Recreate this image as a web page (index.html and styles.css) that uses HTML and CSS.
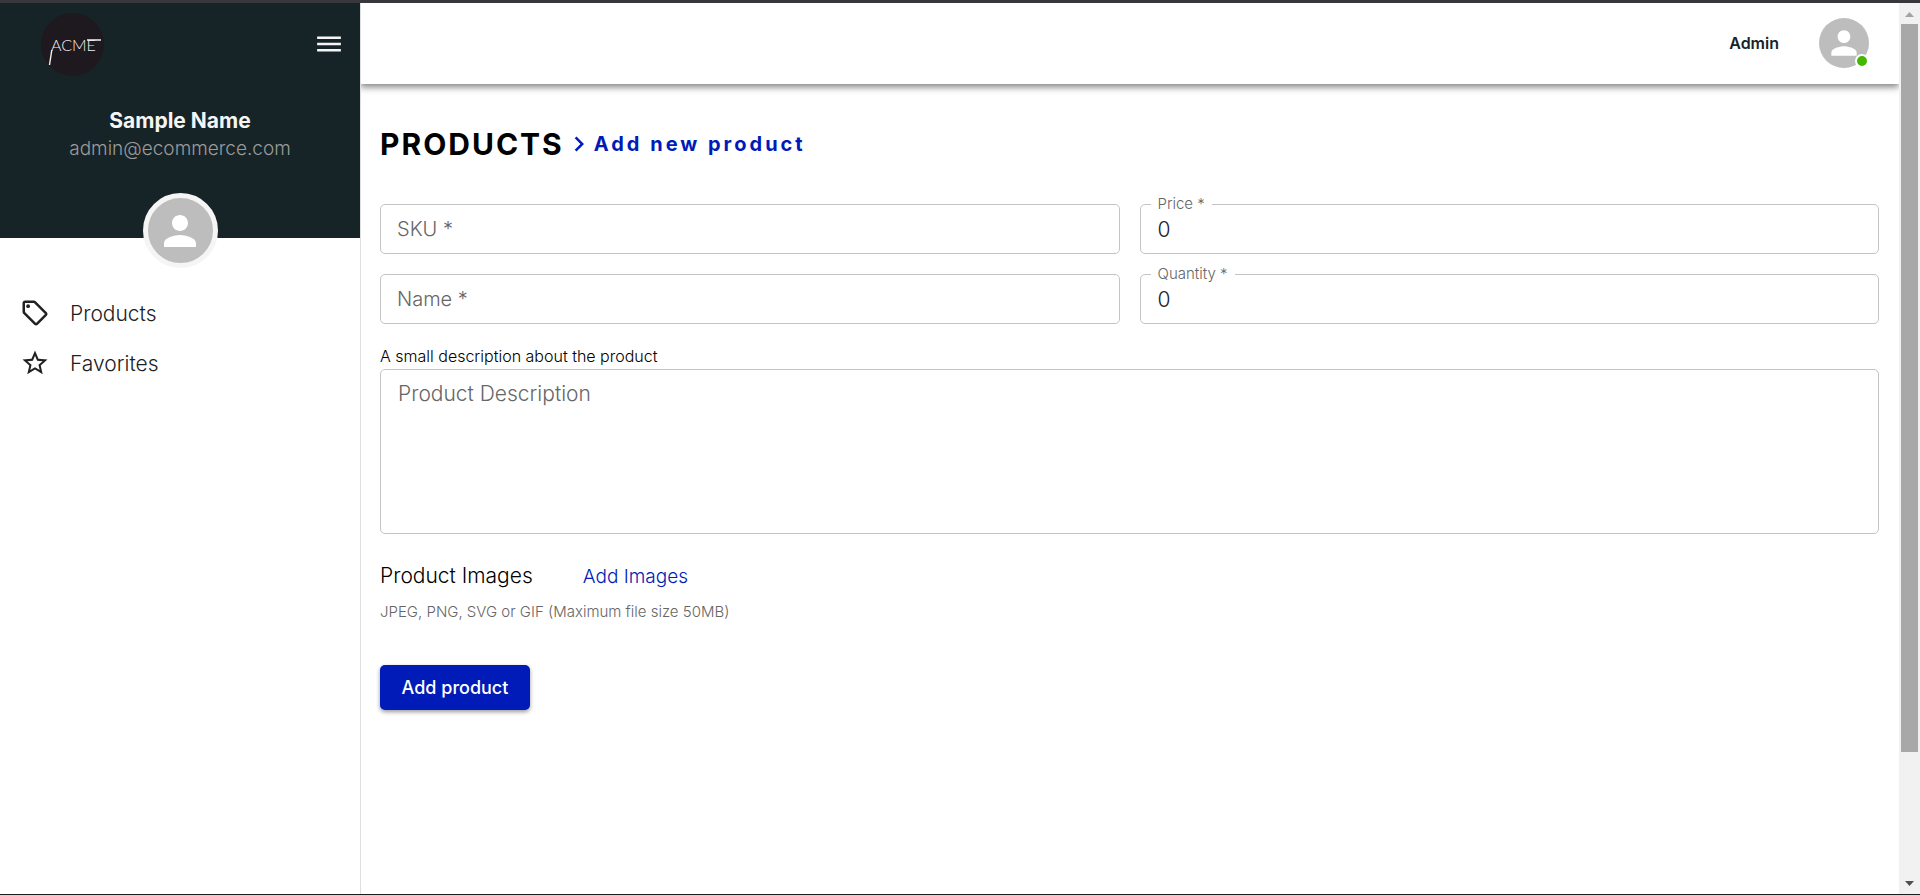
FILE: index.html
```html
<!DOCTYPE html>
<html lang="en">
<head>
<meta charset="utf-8">
<meta name="viewport" content="width=device-width, initial-scale=1">
<title>Add new product</title>
<link rel="stylesheet" href="styles.css">
</head>
<body>
<div class="app">
  <aside class="sidebar">
    <div class="profile">
      <div class="brand-row">
        <svg class="logo" viewBox="0 0 63 63" role="img" aria-label="ACME">
          <circle cx="31.500" cy="31.500" r="31.500" fill="#1e181f"/>
          <text class="logo-text" x="10" y="38">ACME</text>
          <path d="M10.800 37L8.500 52M46 27H60" fill="none" stroke="#f2f2f2" stroke-width="1.400"/>
        </svg>
        <button class="menu-button" type="button" aria-label="Toggle menu">
          <svg class="icon" viewBox="0 0 24 24"><path d="M2.500 18h19v-2h-19v2zm0-5h19v-2h-19v2zm0-7v2h19V6h-19z"/></svg>
        </button>
      </div>
      <p class="profile-name">Sample Name</p>
      <p class="profile-email">admin@ecommerce.com</p>
      <div class="profile-avatar">
        <svg class="person" viewBox="0 0 24 24"><path d="M12 12c2.210 0 4-1.790 4-4s-1.790-4-4-4-4 1.790-4 4 1.790 4 4 4zm0 2c-2.670 0-8 1.340-8 4v2h16v-2c0-2.660-5.330-4-8-4z"/></svg>
      </div>
    </div>
    <nav class="nav">
      <a class="nav-link" href="#products">
        <svg class="icon" viewBox="0 0 24 24"><path d="M21.410 11.410l-8.830-8.830c-.37-.37-.88-.58-1.410-.58H4c-1.100 0-2 .9-2 2v7.170c0 .53.21 1.040.59 1.410l8.830 8.830c.78.78 2.050.78 2.830 0l7.170-7.170c.78-.78.78-2.040-.01-2.830zM12.830 20L4 11.170V4h7.170L20 12.830 12.830 20z"/><circle cx="6.500" cy="6.500" r="1.500"/></svg>
        Products
      </a>
      <a class="nav-link" href="#favorites">
        <svg class="icon" viewBox="0 0 24 24"><path d="M22 9.240l-7.190-.62L12 2 9.190 8.630 2 9.240l5.460 4.730L5.820 21 12 17.270 18.180 21l-1.630-7.030L22 9.240zM12 15.400l-3.760 2.270 1-4.280-3.320-2.880 4.380-.38L12 6.100l1.710 4.040 4.380.38-3.320 2.880 1 4.280L12 15.400z"/></svg>
        Favorites
      </a>
    </nav>
  </aside>

  <div class="page">
    <header class="topbar">
      <span class="role">Admin</span>
      <div class="avatar">
        <svg class="person" viewBox="0 0 24 24"><path d="M12 12c2.210 0 4-1.790 4-4s-1.790-4-4-4-4 1.790-4 4 1.790 4 4 4zm0 2c-2.670 0-8 1.340-8 4v2h16v-2c0-2.660-5.330-4-8-4z"/></svg>
        <span class="status"></span>
      </div>
    </header>

    <main class="content">
      <div class="breadcrumb">
        <h1 class="title">PRODUCTS</h1>
        <svg class="chevron" viewBox="0 0 24 24"><path d="M10 6L8.590 7.410 13.170 12l-4.580 4.590L10 18l6-6z"/></svg>
        <h2 class="subtitle">Add new product</h2>
      </div>

      <form class="form">
        <div class="fields">
          <div class="field">
            <input class="input" id="sku" type="text">
            <label class="hint" for="sku">SKU *</label>
          </div>
          <div class="field">
            <input class="input" id="price" type="text" inputmode="decimal" value="0">
            <label class="float" for="price">Price *</label>
          </div>
          <div class="field">
            <input class="input" id="name" type="text">
            <label class="hint" for="name">Name *</label>
          </div>
          <div class="field">
            <input class="input" id="quantity" type="text" inputmode="numeric" value="0">
            <label class="float" for="quantity">Quantity *</label>
          </div>
        </div>

        <label class="caption" for="description">A small description about the product</label>
        <textarea class="input textarea" id="description" placeholder="Product Description"></textarea>

        <div class="images">
          <h3 class="images-title">Product Images</h3>
          <button class="link-button" type="button">Add Images</button>
        </div>
        <p class="note">JPEG, PNG, SVG or GIF (Maximum file size 50MB)</p>
        <button class="submit" type="submit">Add product</button>
      </form>
    </main>
  </div>

  <div class="scrollbar" aria-hidden="true">
    <svg class="arrow arrow-up" viewBox="0 0 9 5"><path d="M0 5L4.500 0L9 5z"/></svg>
    <div class="track"><div class="thumb"></div></div>
    <svg class="arrow arrow-down" viewBox="0 0 9 5"><path d="M0 0H9L4.500 5z"/></svg>
  </div>
</div>
</body>
</html>
```
FILE: styles.css
```css
* {
  box-sizing: border-box;
}

body,
h1,
h2,
h3,
p {
  margin: 0;
}

body,
button,
input,
textarea {
  font-family: Inter, "Open Sans", sans-serif;
  font-weight: 300;
}

.app {
  display: flex;
  min-height: 100vh;
  border-top: 3px solid #38373b;
  border-bottom: 1px solid #1f1b20;
  background: #fff;
}

.icon {
  display: block;
  width: 30px;
  height: 30px;
  fill: currentColor;
}

.person {
  display: block;
  fill: #fff;
}

/* Sidebar */
.sidebar {
  position: relative;
  z-index: 1;
  flex: 0 0 360px;
  box-shadow: 1px 0 #dedede;
}

.profile {
  display: flex;
  flex-direction: column;
  height: 235px;
  padding-top: 10px;
  background: #172427;
  text-align: center;
}

.brand-row {
  display: flex;
  align-items: center;
  justify-content: space-between;
  padding: 0 16px 0 41px;
}

.logo {
  width: 63px;
  height: 63px;
}

.logo-text {
  fill: #f2f2f2;
  font-family: Lato, "Liberation Sans", sans-serif;
  font-size: 16px;
  font-weight: 300;
}

.menu-button {
  padding: 0 0 2px;
  border: 0;
  background: none;
  color: #f5f5f5;
}

.profile-name {
  margin-top: 30px;
  color: #f5f5f5;
  font-size: 21px;
  font-weight: 700;
  line-height: 30px;
}

.profile-email {
  color: #9b9b9b;
  font-size: 19px;
  line-height: 26px;
}

.profile-avatar {
  display: flex;
  flex: none;
  align-items: center;
  justify-content: center;
  align-self: center;
  width: 75px;
  height: 75px;
  margin-top: 31px;
  border: 5px solid #f5f5f5;
  border-radius: 50%;
  background: #bdbdbd;
}

.profile-avatar .person {
  width: 48px;
  height: 48px;
}

.nav {
  padding-top: 50px;
}

.nav-link {
  display: flex;
  align-items: center;
  gap: 20px;
  height: 50px;
  padding-left: 20px;
  color: #212121;
  font-size: 21px;
  text-decoration: none;
}

/* Top bar */
.page {
  flex: 1;
  min-width: 0;
}

.topbar {
  display: flex;
  align-items: center;
  justify-content: flex-end;
  gap: 40px;
  height: 81px;
  padding: 0 30px 2px;
  box-shadow: 0 3px 7px rgba(0, 0, 0, 0.5);
  clip-path: inset(0 0 -20px 0);
}

.role {
  color: #172427;
  font-size: 16px;
  font-weight: 600;
}

.avatar {
  position: relative;
  display: flex;
  align-items: center;
  justify-content: center;
  width: 50px;
  height: 50px;
  border-radius: 50%;
  background: #bdbdbd;
}

.avatar .person {
  width: 38px;
  height: 38px;
}

.status {
  position: absolute;
  right: 0;
  bottom: 0;
  width: 14px;
  height: 14px;
  border: 2px solid #fff;
  border-radius: 50%;
  background: #44b700;
}

/* Content */
.content {
  padding: 40px 20px;
}

.breadcrumb {
  display: flex;
  align-items: center;
  height: 40px;
}

.title {
  font-size: 30px;
  font-weight: 700;
  letter-spacing: 2px;
}

.chevron {
  width: 30px;
  height: 30px;
  fill: #001bb7;
}

.subtitle {
  color: #001bb7;
  font-size: 20px;
  font-weight: 700;
  letter-spacing: 3px;
}

.form {
  padding-top: 40px;
}

.fields {
  display: grid;
  grid-template-columns: 1fr 1fr;
  gap: 20px;
}

.field {
  position: relative;
}

.input {
  display: block;
  width: 100%;
  height: 50px;
  padding: 0 17px;
  border: 1px solid #c4c4c4;
  border-radius: 5px;
  background: none;
  color: #212121;
  font-size: 21px;
}

.hint,
.float {
  position: absolute;
  color: #666;
}

.hint {
  top: 0;
  left: 17px;
  font-size: 20px;
  line-height: 50px;
  pointer-events: none;
}

.float {
  top: -10px;
  left: 11px;
  padding: 0 7px;
  background: #fff;
  font-size: 15px;
  line-height: 20px;
}

.caption {
  display: block;
  margin-top: 20px;
  font-size: 16px;
  line-height: 25px;
}

.textarea {
  height: 165px;
  padding: 12px 17px;
  line-height: 24px;
  resize: none;
}

.textarea::placeholder {
  color: #666;
  opacity: 1;
}

.images {
  display: flex;
  align-items: center;
  gap: 50px;
  margin-top: 27px;
}

.images-title {
  font-size: 21px;
  font-weight: 300;
  line-height: 30px;
}

.link-button {
  padding: 0;
  border: 0;
  background: none;
  color: #001bb7;
  font-size: 19px;
}

.note {
  margin-top: 8px;
  color: #666;
  font-size: 15px;
  line-height: 25px;
}

.submit {
  min-width: 150px;
  height: 45px;
  margin-top: 41px;
  padding: 0 20px;
  border: 0;
  border-radius: 5px;
  background: #001bb7;
  box-shadow: 0 2px 4px rgba(0, 0, 0, 0.4);
  color: #fff;
  font-size: 18px;
  font-weight: 500;
}

/* Scrollbar */
.scrollbar {
  display: flex;
  flex: 0 0 21px;
  flex-direction: column;
  align-items: center;
  background: #f1f1f1;
}

.arrow {
  width: 9px;
  height: 5px;
}

.arrow-up {
  margin: 9px 0 7px;
  fill: #a3a3a3;
}

.arrow-down {
  margin: 7px 0 8px;
  fill: #505050;
}

.track {
  flex: 1;
  width: 17px;
}

.thumb {
  height: 85.6%;
  background: #a8a8a8;
}
```
